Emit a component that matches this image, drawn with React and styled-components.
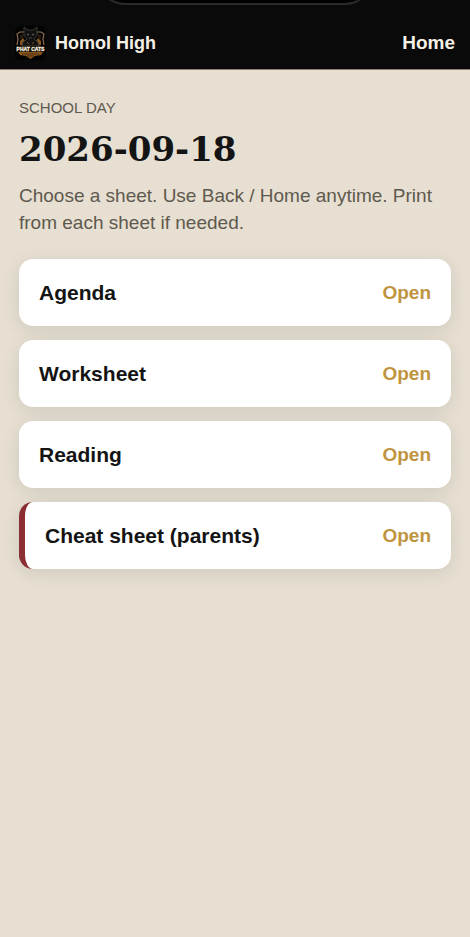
import styled, { createGlobalStyle } from "styled-components";

const GlobalStyle = createGlobalStyle`
  * {
    box-sizing: border-box;
  }

  body {
    margin: 0;
    background: #e6dfd2;
    color: #141414;
    font-family: "Helvetica Neue", "Liberation Sans", Arial, sans-serif;
  }
`;

const Page = styled.div`
  position: relative;
  min-height: 100vh;
  overflow: hidden;
`;

// lower edge of the phone's camera cutout
const Notch = styled.div`
  position: absolute;
  top: -60px;
  left: 50%;
  transform: translateX(-50%);
  width: 276px;
  height: 65px;
  border: 2px solid #2a2a2a;
  border-radius: 28px;
  background: #000;
`;

const Header = styled.header`
  display: flex;
  align-items: center;
  justify-content: space-between;
  padding: 26px 15px 9px;
  background: #0a0a0a;
  border-bottom: 1px solid #8a7f70;
`;

const Brand = styled.div`
  display: flex;
  align-items: center;
  gap: 9px;
  color: #f5f0e6;
  font-size: 18px;
  font-weight: 700;
`;

const Logo = styled.svg`
  display: block;
  width: 31px;
  height: 34px;
`;

const HomeLink = styled.a`
  color: #f5f0e6;
  font-size: 19px;
  font-weight: 700;
  text-decoration: none;
`;

const Main = styled.main`
  padding: 28px 19px;
`;

const Eyebrow = styled.p`
  margin: 0;
  color: #5f594e;
  font-size: 15px;
  line-height: 20px;
  text-transform: uppercase;
`;

const Title = styled.h1`
  margin: 10px 0 12px;
  font-family: Georgia, "DejaVu Serif", serif;
  font-size: 34px;
  font-weight: 700;
  line-height: 42px;
`;

const Intro = styled.p`
  margin: 0 0 23px;
  color: #5f594e;
  font-size: 19px;
  line-height: 27px;
`;

const SheetList = styled.nav`
  display: flex;
  flex-direction: column;
  gap: 14px;
`;

const SheetCard = styled.a`
  display: flex;
  align-items: center;
  justify-content: space-between;
  padding: 21px 20px;
  border-left: ${({ $parents }) => ($parents ? "6px solid #8b2e33" : "none")};
  border-radius: 14px;
  background: #fff;
  box-shadow: 0 4px 18px rgba(0, 0, 0, 0.1);
  color: #141414;
  text-decoration: none;
`;

const SheetName = styled.span`
  font-size: 21px;
  font-weight: 700;
  line-height: 25px;
`;

const OpenLabel = styled.span`
  color: #c0943f;
  font-size: 19px;
  font-weight: 700;
`;

const sheets = [
  { name: "Agenda" },
  { name: "Worksheet" },
  { name: "Reading" },
  { name: "Cheat sheet (parents)", parents: true },
];

function CatLogo() {
  return (
    <Logo viewBox="0 0 31 34" aria-hidden="true">
      <rect width="31" height="34" rx="6" fill="#030303" />
      {/* shield */}
      <path
        d="M9 6 L5 6 L2 8 L3 13 L2 19 M22 6 L26 6 L29 8 L28 13 L29 19"
        fill="none"
        stroke="#8d7050"
        strokeWidth="1.2"
      />
      <path d="M5 9 L9 8 L8 12 L5 13 Z M26 9 L22 8 L23 12 L26 13 Z" fill="#2a1a0c" />
      <path
        d="M5 15 L8 12 L10 15 L8 19 L5 19 Z M26 15 L23 12 L21 15 L23 19 L26 19 Z"
        fill="#82541f"
      />
      {/* cat */}
      <path
        d="M9 1 L13 4 L18 4 L22 1 L22 9 L19 13 L23 16 L24 20 L7 20 L8 16 L12 13 L9 9 Z"
        fill="#121212"
        stroke="#4d4b49"
        strokeWidth="0.7"
      />
      <path d="M12 8 L14 9 M19 8 L17 9" stroke="#8d877c" strokeWidth="0.8" />
      <path d="M14 13 L15.5 11 L17 13" stroke="#55504a" strokeWidth="0.6" fill="none" />
      <path d="M12 16 L14 18 M19 16 L17 18" stroke="#76501f" strokeWidth="1" />
      {/* banner */}
      <path d="M3 26 L28 26 L26 29 L20 30 L15.5 33 L11 30 L5 29 Z" fill="#8a581e" />
      <path d="M7 28 L24 28 M12 30 L19 30" stroke="#39230c" strokeWidth="0.8" />
      <rect x="1" y="20" width="29" height="6" fill="#17100a" />
      <text
        x="15.5"
        y="25"
        textAnchor="middle"
        fontFamily="Liberation Sans, sans-serif"
        fontSize="5"
        fontWeight="700"
        fill="#f2eadc"
        stroke="#f2eadc"
        strokeWidth="0.3"
      >
        PHAT CATS
      </text>
    </Logo>
  );
}

export default function App() {
  return (
    <>
      <GlobalStyle />
      <Page>
        <Header>
          <Brand>
            <CatLogo />
            <span>Homol High</span>
          </Brand>
          <HomeLink href="#home">Home</HomeLink>
        </Header>
        <Notch />
        <Main>
          <Eyebrow>School day</Eyebrow>
          <Title>2026-09-18</Title>
          <Intro>
            Choose a sheet. Use Back / Home anytime. Print from each sheet if needed.
          </Intro>
          <SheetList>
            {sheets.map(({ name, parents }) => (
              <SheetCard key={name} href="#sheet" $parents={parents}>
                <SheetName>{name}</SheetName>
                <OpenLabel>Open</OpenLabel>
              </SheetCard>
            ))}
          </SheetList>
        </Main>
      </Page>
    </>
  );
}
